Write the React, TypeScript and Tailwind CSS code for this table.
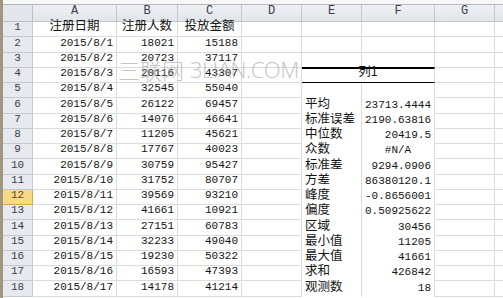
import clsx from "clsx";

// column widths taken from the sheet grid
const COLS = [
  { key: "A", w: "w-[84px]" },
  { key: "B", w: "w-[61px]" },
  { key: "C", w: "w-[64px]" },
  { key: "D", w: "w-[60px]" },
  { key: "E", w: "w-[60px]" },
  { key: "F", w: "w-[73px]" },
  { key: "G", w: "w-[60px]" },
  { key: "", w: "w-[40px]" },
];

const USERS = [18021, 20723, 20116, 32545, 26122, 14076, 11205, 17767, 30759, 31752, 39569, 41661, 27151, 32233, 19230, 16593, 14178];
const SPEND = [15188, 37117, 43307, 55040, 69457, 46641, 45621, 40023, 95427, 80707, 93210, 10921, 60783, 49040, 50322, 47393, 41214];

// descriptive stats block, starting at row 6
const STATS: [string, string][] = [
  ["平均", "23713.4444"],
  ["标准误差", "2190.63816"],
  ["中位数", "20419.5"],
  ["众数", "#N/A"],
  ["标准差", "9294.0906"],
  ["方差", "86380120.1"],
  ["峰度", "-0.8656001"],
  ["偏度", "0.50925622"],
  ["区域", "30456"],
  ["最小值", "11205"],
  ["最大值", "41661"],
  ["求和", "426842"],
  ["观测数", "18"],
];

const MONO = "font-['Liberation_Mono',monospace] text-[11px]";
const ZH = "font-['Noto_Sans_CJK_SC',sans-serif] text-[12.5px]";
const GRID = "border-[#dadcdd]";

function Cell({ w, children, align = "right", noBottom, className }: { w: string; children?: React.ReactNode; align?: "left" | "right" | "center"; noBottom?: boolean; className?: string }) {
  return (
    <div
      className={clsx(
        "shrink-0 h-full flex items-end pb-[1px] px-[3px] border-r whitespace-nowrap overflow-visible text-[#141414]",
        GRID,
        !noBottom && "border-b",
        align === "right" && "justify-end",
        align === "center" && "justify-center",
        align === "left" && "justify-start",
        w,
        className
      )}
    >
      {children}
    </div>
  );
}

function Row({ n }: { n: number }) {
  const h = n % 4 === 2 ? "h-[16px]" : "h-[15px]";
  const selected = n === 12;
  const i = n - 2;
  const stat = n >= 6 ? STATS[n - 6] : undefined;

  return (
    <div className={clsx("flex", h)}>
      <div
        className={clsx(
          "shrink-0 w-[30px] h-full flex items-end justify-center pb-[1px] border-r border-b font-['Liberation_Mono',monospace] text-[11px]",
          selected
            ? "bg-[#f8d889] border-[#e2a546] text-[#5a4a20]"
            : "bg-[#e6e9ee] border-[#c3c9d2] text-[#3b3f46]"
        )}
      >
        {n}
      </div>

      {/* A */}
      <Cell w={COLS[0].w} align={n === 1 ? "center" : "right"}>
        {n === 1 ? <span className={ZH}>注册日期</span> : <span className={MONO}>2015/8/{n - 1}</span>}
      </Cell>
      {/* B */}
      <Cell w={COLS[1].w} align={n === 1 ? "center" : "right"}>
        {n === 1 ? <span className={ZH}>注册人数</span> : <span className={MONO}>{USERS[i]}</span>}
      </Cell>
      {/* C */}
      <Cell w={COLS[2].w} align={n === 1 ? "center" : "right"}>
        {n === 1 ? <span className={ZH}>投放金额</span> : <span className={MONO}>{SPEND[i]}</span>}
      </Cell>
      {/* D */}
      <Cell w={COLS[3].w} />

      {/* E + F */}
      {n <= 3 && (
        <>
          <Cell w={COLS[4].w} className={n === 3 ? "border-b-black" : undefined} />
          <Cell w={COLS[5].w} className={n === 3 ? "border-b-black" : undefined} />
        </>
      )}
      {n === 4 && (
        <Cell w="w-[133px]" align="center" className="border-t border-t-black border-b-black">
          <span className={ZH}>列1</span>
        </Cell>
      )}
      {n === 5 && (
        <>
          <Cell w={COLS[4].w} noBottom />
          <Cell w={COLS[5].w} noBottom />
        </>
      )}
      {stat && (
        <>
          <Cell w={COLS[4].w} align="left" noBottom>
            <span className={ZH}>{stat[0]}</span>
          </Cell>
          <Cell w={COLS[5].w} align={stat[1] === "#N/A" ? "center" : "right"} noBottom>
            <span className={MONO}>{stat[1]}</span>
          </Cell>
        </>
      )}

      {/* G, H */}
      <Cell w={COLS[6].w} />
      <Cell w={COLS[7].w} />
    </div>
  );
}

export default function App() {
  return (
    <div className="relative w-[503px] h-[298px] overflow-hidden bg-white flex">
      {/* window frame on the left */}
      <div className="w-[3px] h-full shrink-0 bg-[#a39680]" />

      <div className="flex-1 flex flex-col">
        <div className="h-[5px] shrink-0 bg-[#f7f7f7] border-b border-[#b5b8bd]" />

        {/* column headers */}
        <div className="flex h-[17px] shrink-0">
          <div className="shrink-0 w-[30px] h-full bg-[#e3e7ec] border-r border-b border-[#b9c1cc]" />
          {COLS.map((c, k) => (
            <div
              key={k}
              className={clsx(
                "shrink-0 h-full flex items-end justify-center pb-[1px] bg-gradient-to-b from-[#eef0f3] to-[#e1e5ea] border-r border-b border-[#bfc6d0] font-['Liberation_Mono',monospace] text-[12px] text-[#3b3f46]",
                c.w
              )}
            >
              {c.key}
            </div>
          ))}
        </div>

        {Array.from({ length: 19 }, (_, k) => k + 1).map((n) =>
          n <= 18 ? <Row key={n} n={n} /> : <div key={n} className="h-[15px]" />
        )}
      </div>

      {/* site watermark */}
      <div className="absolute left-[118px] top-[53px] flex items-center gap-[6px] pointer-events-none text-[#9d9d9d] opacity-60">
        <span className="font-['Noto_Sans_CJK_SC',sans-serif] text-[22px] font-light">三联网</span>
        <span className="font-['Open_Sans',sans-serif] text-[22px] font-light tracking-[-0.5px]">3LIAN.COM</span>
      </div>
    </div>
  );
}
